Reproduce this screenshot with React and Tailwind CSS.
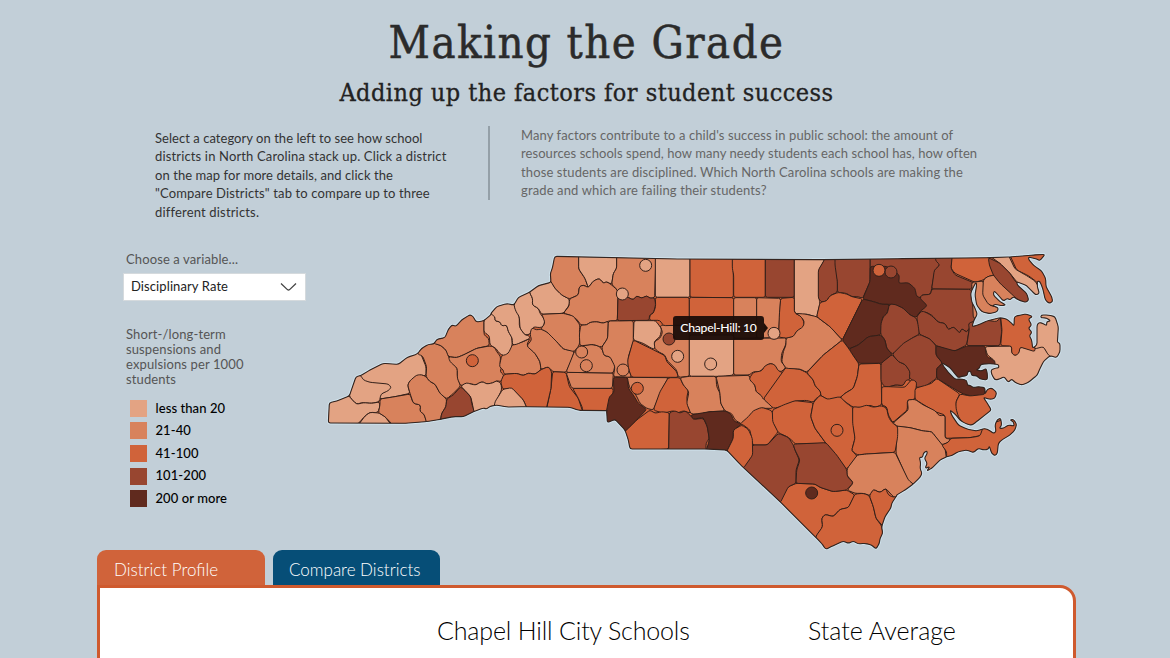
import React from "react";

const LEVELS = ["", "#e3a383", "#d8825c", "#d0633a", "#984630", "#602a1e"];

// Map sheets: each has an origin on the canvas and is digitised at three units per pixel.
const SHEETS = [
  {
    x: 320, y: 250,
    regions: [
      [1, "120,360 200,320 300,300 305,318 318,350 318,378 300,375 270,392 263,405 270,430 225,440 180,447 150,430 120,390"],
      [1, "88,438 100,370 122,376 130,390 150,397 205,402 214,412 205,422 183,432 178,455 155,460 125,458 110,463 95,448"],
      [1, "10,450 88,438 95,448 110,463 130,458 155,460 178,456 180,470 173,488 150,487 135,498 115,521 20,530"],
      [1, "115,525 135,498 150,487 178,489 195,500 214,525"],
      [2, "180,447 225,440 270,432 280,460 302,465 300,485 312,492 322,520 214,530 214,520 195,500 175,488 180,465"],
      [2, "270,430 263,405 270,392 290,375 305,374 318,380 330,395 345,402 360,430 380,447 378,470 365,490 360,520 322,525 312,492 300,485 302,465 280,460"],
      [2, "292,312 300,270 342,270 345,280 365,288 382,305 385,320 400,340 412,355 412,380 422,408 400,430 380,447 360,430 345,402 330,395 318,380 320,350 308,318"],
      [2, "340,280 350,240 396,200 450,180 470,200 492,204 492,255 506,265 508,287 470,295 430,315 410,323 385,320 378,300 362,286"],
      [2, "385,320 410,323 430,315 470,295 508,288 522,290 530,305 542,320 540,340 545,352 540,365 552,375 545,395 530,392 518,399 500,402 490,396 480,397 468,405 455,402 440,400 422,408 412,385 412,355 390,335"],
      [1, "422,408 440,398 455,403 468,405 480,397 490,396 500,402 518,399 530,392 543,400 545,420 535,440 525,465 500,495 462,500 458,465 452,440"],
      [4, "422,410 435,422 452,440 455,460 464,490 430,515 360,520 365,490 378,470 380,447 400,435"],
    ],
    dots: [[3, 457, 332]],
  },
  {
    x: 480, y: 245,
    regions: [
      [2, "65,333 97,300 130,290 150,280 140,300 165,325 180,350 183,374 165,388 145,384 130,392 110,385 72,388 70,375 58,365 62,345"],
      [1, "12,225 33,203 45,215 45,228 60,230 65,243 80,240 85,260 95,275 97,300 85,325 70,332 58,325 48,310 30,300 28,272 12,262"],
      [1, "33,208 40,170 100,165 102,182 118,215 118,245 135,270 147,272 150,280 110,298 97,300 97,280 85,260 80,240 65,243 60,230 45,228 45,215"],
      [1, "102,182 110,145 148,132 150,145 158,160 157,180 175,190 180,205 195,225 190,245 178,248 160,245 150,268 135,270 120,250 118,215 108,200"],
      [1, "148,142 175,105 210,95 215,112 225,130 245,150 268,162 268,180 250,205 185,208 175,190 157,180 158,160"],
      [2, "200,90 214,20 296,20 296,72 315,100 325,128 310,120 298,125 295,150 268,162 245,150 225,130 213,110"],
      [1, "296,20 410,20 410,70 400,85 395,118 380,110 370,115 358,100 340,108 325,128 315,100 296,72"],
      [2, "410,20 528,20 524,158 510,160 500,152 485,160 470,152 460,165 440,155 414,155 412,135 395,118 400,85 410,70"],
      [2, "325,128 340,108 358,100 370,115 380,110 395,120 412,135 414,155 412,227 385,228 370,235 350,230 330,232 320,240 302,240 290,222 270,210 250,205 268,182 268,162 295,150 298,125 310,120"],
      [2, "182,252 200,260 215,275 230,290 250,312 283,318 275,345 258,382 218,380 205,365 183,374 180,350 165,325 140,303 155,285 150,268 155,248 170,255"],
      [2, "185,208 250,205 280,213 300,240 298,260 300,280 298,300 283,320 250,312 230,290 215,275 200,260 182,252 195,235 190,218"],
      [3, "218,380 258,382 268,425 295,460 308,500 198,500 213,430"],
      [3, "72,388 110,385 130,392 145,384 165,388 183,374 205,365 215,380 213,430 198,495 143,495 130,465 95,430 68,433 62,410"],
      [1, "68,433 95,428 130,465 143,495 40,500 45,470 58,450"],
      [3, "278,430 400,430 397,460 387,478 382,505 308,505 308,490 295,460"],
      [2, "258,382 400,384 397,430 275,430"],
      [2, "283,320 300,305 330,298 355,302 368,315 372,332 390,335 405,360 400,384 258,382"],
      [2, "302,240 320,240 330,232 350,230 370,235 385,228 383,280 365,307 340,298 300,303 298,270"],
      [2, "385,228 460,227 460,290 445,335 445,370 455,397 400,395 405,365 390,335 372,332 365,307 383,280"],
      [4, "414,155 440,155 460,165 470,152 485,160 500,152 510,160 524,158 527,180 520,205 508,210 508,226 412,227"],
    ],
    dots: [],
  },
  {
    x: 620, y: 245,
    regions: [
      [1, "106,20 210,20 210,157 106,157"],
      [3, "210,20 340,20 340,158 210,157"],
      [3, "337,20 436,20 436,157 341,157 341,90 337,70"],
      [4, "436,20 523,20 523,157 436,157"],
      [2, "120,242 130,240 208,240 208,394 175,397 170,375 140,345 135,330 118,322 103,310 103,290 120,280 128,262"],
      [3, "106,157 208,157 208,240 130,242 120,226 88,226 90,210 100,205 107,185"],
      [3, "208,157 341,158 341,280 208,280"],
      [2, "341,158 410,158 410,280 341,280"],
      [2, "410,158 482,160 480,200 475,277 410,280"],
      [1, "523,20 615,20 615,42 597,75 597,160 600,175 590,217 560,207 540,210 523,203"],
      [3, "482,160 523,157 523,203 545,215 553,235 548,250 530,258 522,275 497,280 476,276 478,210"],
      [1, "208,270 341,270 341,390 310,394 208,394"],
      [2, "341,280 500,279 497,300 485,325 483,350 498,367 485,380 470,378 465,360 450,355 435,365 420,380 400,380 388,390 341,390"],
      [1, "42,227 107,227 125,252 120,275 102,290 105,312 95,310 70,295 40,285"],
      [3, "40,285 95,312 135,332 140,350 170,380 175,397 35,397 25,370 23,345"],
      [2, "20,397 145,398 125,435 100,495 80,490 60,475 48,450 30,430"],
      [3, "145,398 180,398 190,420 205,435 200,460 205,485 213,505 190,497 170,505 160,497 130,505 100,495 120,440"],
      [2, "180,398 208,394 288,394 290,425 300,445 302,475 315,498 270,500 240,507 213,507 200,475 207,440 190,420"],
      [2, "288,394 388,391 392,405 405,420 408,440 430,455 460,490 420,490 390,515 370,540 345,525 335,505 315,498 302,475 300,445"],
      [3, "388,400 400,382 425,378 435,362 452,355 465,360 475,378 490,383 430,465 425,452 408,440 405,420 392,408"],
      [3, "498,367 540,373 560,383 580,405 585,422 602,440 602,452 588,460 580,472 560,466 525,468 500,482 460,490 450,480 430,462"],
    ],
    dots: [],
  },
  {
    x: 780, y: 245,
    regions: [
      [2, "18,279 40,275 50,258 70,245 73,228 60,212 45,205 75,207 110,215 150,245 187,285 130,330 80,382 60,372 18,370 5,350 10,320 18,300"],
      [4, "270,20 478,20 480,60 465,75 455,130 452,148 425,150 420,160 440,180 340,200 270,100"],
      [4, "163,20 270,20 270,110 248,160 235,155 215,155 200,145 172,142 172,110 163,75"],
      [4, "135,20 165,20 165,60 172,110 172,142 150,152 140,168 125,172 115,160 115,75 133,45"],
      [3, "110,215 120,172 140,168 150,152 175,142 200,147 215,155 248,162 187,285 150,245"],
      [5, "271,64 320,64 352,85 358,92 356,115 385,113 405,130 410,155 430,160 442,178 440,188 425,195 408,218 390,210 370,190 340,178 325,178 305,178 280,170 248,162 270,110"],
      [5, "248,162 280,170 305,178 328,178 322,205 308,215 302,270 265,275 235,300 207,312 187,285"],
      [4, "328,178 345,178 370,190 390,210 408,218 418,245 418,268 395,280 370,300 337,328 320,310 315,285 302,268 303,235 310,215 322,205"],
      [5, "302,270 315,285 320,310 337,328 305,355 235,355 215,325 207,312 235,300 265,275"],
      [3, "187,285 207,312 215,325 237,357 232,395 220,430 195,445 180,458 150,467 122,452 122,440 105,422 100,405 80,383 130,330"],
      [3, "237,357 303,355 305,480 285,487 270,480 250,488 220,487 195,470 180,458 195,445 220,430 232,395"],
      [4, "303,355 337,328 355,350 375,358 392,380 390,403 375,412 370,422 345,420 330,425 313,425 303,410"],
      [3, "305,480 305,430 315,425 330,425 345,420 370,422 378,405 390,405 410,428 402,445 408,458 385,465 385,485 338,535 325,495"],
    ],
    dots: [],
  },
  {
    x: 900, y: 245,
    regions: [
      [4, "118,20 160,20 153,70 165,90 225,115 212,133 95,132 103,75 120,60 105,45"],
      [3, "158,20 265,20 270,60 283,90 262,95 250,105 225,112 165,85 153,70"],
      [4, "95,132 212,133 250,200 225,260 205,250 200,262 185,250 180,265 160,245 145,255 135,235 115,232 95,210 75,200 50,215 60,200 82,182 60,160 65,150 92,148"],
      [4, "50,215 65,198 78,202 95,212 115,232 135,235 145,255 160,245 180,265 185,250 200,262 208,250 200,300 165,318 145,315 108,302 90,282 58,268 55,245"],
      [4, "-23,328 10,295 35,280 58,268 90,282 108,302 108,330 128,355 110,370 110,400 95,410 75,425 50,428 38,405 28,400 30,380 15,358 -5,350"],
      [4, "208,252 205,235 300,200 305,260 300,302 200,302"],
      [5, "108,302 165,318 200,303 255,303 260,335 290,350 310,365 280,415 200,420 255,420 262,452 220,455 185,445 110,400 110,370 128,355 108,330"],
      [1, "255,305 335,303 335,322 345,332 355,325 360,305 385,312 403,312 425,300 450,330 500,430 265,440 264,375 285,362 285,348 262,330"],
      [3, "300,195 408,195 405,320 360,306 357,325 345,332 335,325 335,303 302,302 306,255"],
      [1, "403,312 405,190 500,190 500,350 470,350 445,330 430,305"],
      [2, "215,112 250,108 255,160 270,182 330,188 290,230 220,220"],
      [2, "250,105 262,95 283,90 300,115 360,160 340,190 300,190 265,178 248,150"],
      [3, "325,20 450,20 480,190 430,190 412,112 385,92 350,75"],
      [1, "265,30 325,30 345,72 380,92 405,108 425,140 425,160 375,130 350,110 330,85 300,55"],
      [4, "265,38 300,55 330,85 345,108 400,160 378,185 340,152 300,115 280,90 268,60"],
    ],
    dots: [],
  },
  {
    x: 880, y: 360,
    regions: [
      [3, "25,80 75,82 95,58 110,65 105,118 82,120 82,150 38,188 25,165 20,140 5,135 5,80"],
      [3, "105,85 140,75 155,70 170,55 240,102 228,125 230,145 238,165 260,190 320,205 310,225 270,233 195,235 195,165 165,155 105,118"],
      [3, "240,102 270,108 315,103 316,78 360,78 340,200 260,205 235,170 228,145 228,125"],
      [2, "38,190 85,150 82,120 105,118 130,135 165,152 178,168 195,165 195,235 212,237 205,247 185,255 155,215 130,213 90,203 55,200"],
      [2, "50,198 90,203 130,213 155,215 195,265 200,300 130,400 100,372 85,365 48,280"],
      [3, "185,255 205,247 212,235 270,233 300,228 310,200 420,160 430,240 340,300 200,305 200,275"],
    ],
    dots: [],
  },
  {
    x: 740, y: 380,
    regions: [
      [3, "0,132 25,110 40,92 65,82 90,90 97,95 100,125 115,155 82,195 38,195 30,150 10,135"],
      [3, "97,90 130,75 165,62 220,68 212,110 225,145 258,190 165,192 160,185 145,172 115,158 98,125"],
      [3, "220,68 240,45 262,58 300,50 320,70 338,82 340,130 345,175 335,212 352,228 320,268 258,190 225,145 212,110"],
      [3, "338,80 360,82 380,75 400,82 425,77 440,85 445,110 455,127 473,140 473,170 465,217 380,222 352,225 335,212 345,175 338,130"],
      [2, "352,225 380,222 465,217 505,300 535,325 475,360 460,350 437,325 420,338 400,328 392,347 370,340 345,340 322,330 340,308 320,285 322,265"],
      [3, "145,320 168,310 225,312 240,322 280,335 320,330 345,345 325,383 300,388 280,410 255,403 245,415 248,440 230,470 220,490 105,365"],
      [4, "38,195 82,195 115,160 145,172 160,195 165,210 178,240 168,270 168,310 145,320 120,370 -10,280"],
      [4, "165,192 258,188 290,225 320,268 322,290 340,308 320,330 280,335 240,322 225,312 168,310 170,270 180,240 165,210 160,195"],
      [3, "345,342 370,340 388,347 400,380 408,415 425,438 440,520 220,520 228,468 248,440 245,415 255,403 280,410 300,388 325,383"],
      [3, "388,347 400,328 420,338 437,325 445,345 460,352 485,345 430,440 408,415 400,380"],
    ],
    dots: [[3, 291, 151], [5, 215, 339]],
  },
  {
    x: 600, y: 360,
    regions: [
      [3, "75,212 110,180 150,150 165,160 185,155 208,158 206,267 80,275"],
      [5, "40,52 83,52 85,85 100,105 115,130 140,148 110,180 85,205 75,215 40,190 10,200 18,160 28,110 42,98"],
      [4, "208,158 225,152 240,160 255,152 270,165 280,178 310,175 322,200 328,235 318,250 318,275 206,275"],
      [5, "272,165 300,160 330,155 378,153 395,165 400,182 425,193 400,210 400,235 380,275 318,275 328,240 322,200 310,172 280,178"],
      [3, "380,275 400,235 400,210 425,195 445,208 457,235 458,285 430,325"],
    ],
    dots: [],
  },
  {
    x: 480, y: 245,
    regions: [],
    dots: [[1, 497, 61], [1, 427, 147], [2, 305, 321], [2, 319, 362], [2, 429, 375], [3, 472, 430], [4, 567, 282], [1, 593, 334], [1, 692, 357], [1, 882, 265], [3, 1197, 76], [4, 1233, 81]],
  },
];

// Coast and state line, as runs of points on the same sheets.
const OUTLINE = [
  [320, 250, "25,519 28,458 50,453 88,438 108,380 122,377 150,360 190,340 235,343 262,322 292,312 305,295 325,283 342,282 350,268 375,263 385,238 396,225 408,229 425,210 450,194 460,200 468,216 490,213 512,195"],
  [480, 245, "33,205 50,185 80,176 102,180 115,157 148,142 175,122 213,112 211,85 217,70 224,34 600,42"],
  [620, 245, "600,44"],
  [900, 245, "0,41 265,38 330,36 400,30 435,28 420,47 410,42 385,36 387,45 402,62 425,78 437,100 438,125 455,155 458,170 447,175 436,165 428,130 420,110 412,108 412,125 418,145 408,150 395,138 380,122 350,110 352,120 380,145 386,165 378,172 355,165 340,155 330,165 322,160 310,168 290,145 282,138 280,150 300,170 318,180 305,182 285,178 278,182 295,188 292,200 270,206 245,200 230,180 225,150 230,120 228,112 218,130 212,145 215,170 225,190 232,208 222,225 216,245 235,240 260,228 300,218 320,222 335,235 342,243 343,215 360,210 380,207 398,215 385,222 395,240 385,250 396,262 388,272 395,285 398,310 411,300 411,240 418,232 430,236 440,242 440,230 452,228 440,219 422,218 424,210 445,210 465,215 475,245 473,280 472,292 480,295 480,320 470,338 450,332 430,350 418,375 412,390 400,400 385,412 365,420 345,412 335,402 325,412 312,395 300,402 285,405 275,388 273,375 285,370 297,368 295,358 265,356 242,358 238,370 228,375 245,378 258,370 262,385 262,405 240,402 230,392 215,392 212,378 203,380 202,392 185,394 175,398 168,390 150,368 128,354"],
  [880, 360, "188,15 205,37 225,58 240,57 260,60 262,75 272,77 280,83 295,80 315,83 315,103 322,88 335,84 350,97 345,115 330,118 310,112 322,130 334,150 315,165 290,185 275,196 255,190 240,180 225,162 210,150 215,165 235,195 260,207 290,213 315,205 330,212 340,220 348,215 345,195 352,178 362,175 365,195 358,205 370,205 385,195 403,198 400,185 390,180 400,178 410,192 405,210 390,225 365,240 355,250 352,280 345,287 335,280 328,258 325,268 310,270 295,265 280,278 260,270 235,275 215,287 200,290 180,300 155,325 140,333 150,320 135,325 142,310 133,295 142,280 140,272 130,280 128,292 118,292 122,310 120,325 126,340 120,352 100,372 75,390 50,405"],
  [740, 380, "470,347 455,370 453,383 435,410 425,440 428,460 420,475 418,490 408,507 395,495 375,490 355,492 340,483 325,490 310,483 280,497 257,508 245,490 225,470 120,365 0,253"],
  [600, 360, "380,270 320,267 90,267 85,240 75,210 45,178 22,188 20,152"],
  [480, 245, "382,497 295,496 270,487 130,485 80,486 50,480 30,484 20,492"],
  [320, 250, "490,474 460,485 430,500 400,500 360,508 320,515 250,520"],
];

const toPoints = (text, x, y) =>
  text.split(" ").map((pair) => {
    const [a, b] = pair.split(",").map(Number);
    return [x + a / 3, y + b / 3];
  });

// Closed path whose corners are slightly eased.
function easedPath(points) {
  const n = points.length;
  let d = "";
  points.forEach((p, i) => {
    const prev = points[(i + n - 1) % n];
    const next = points[(i + 1) % n];
    const toward = (q) => {
      const len = Math.hypot(q[0] - p[0], q[1] - p[1]) || 1;
      const t = Math.min(len * 0.4, 2.2) / len;
      return [p[0] + (q[0] - p[0]) * t, p[1] + (q[1] - p[1]) * t].map((v) => v.toFixed(2));
    };
    d += `${i ? "L" : "M"}${toward(prev)}Q${p[0].toFixed(2)},${p[1].toFixed(2)} ${toward(next)}`;
  });
  return d + "Z";
}

const COAST = easedPath(OUTLINE.flatMap(([x, y, text]) => toPoints(text, x, y)));

function DistrictMap() {
  return (
    <svg className="block h-[300px] w-[740px]" viewBox="324 250 740 300" strokeLinejoin="round">
      <defs>
        <clipPath id="coast"><path d={COAST} /></clipPath>
      </defs>
      <path d={COAST} fill="none" stroke="#cfe3ed" strokeWidth="3" />
      <g clipPath="url(#coast)" stroke="#33201a" strokeWidth="1">
        <path d={COAST} fill="#d0633a" />
        {SHEETS.map((s, i) => (
          <g key={i}>
            {s.regions.map(([level, text], j) => (
              <path key={j} d={easedPath(toPoints(text, s.x, s.y))} fill={LEVELS[level]} />
            ))}
          </g>
        ))}
      </g>
      <path d={COAST} fill="none" stroke="#33241f" strokeWidth="1.1" />
      <g stroke="#33201a" strokeWidth="1">
        {SHEETS.flatMap((s) =>
          s.dots.map(([level, a, b]) => (
            <circle key={`${s.x + a}-${b}`} cx={s.x + a / 3} cy={s.y + b / 3} r="6" fill={LEVELS[level]} />
          ))
        )}
      </g>
    </svg>
  );
}

const LEGEND = [
  ["bg-[#e3a383]", "less than 20"],
  ["bg-[#d8825c]", "21-40"],
  ["bg-[#d0633a]", "41-100"],
  ["bg-[#984630]", "101-200"],
  ["bg-[#602a1e]", "200 or more"],
];

export default function App() {
  return (
    <div className="flex h-[658px] w-[1170px] flex-col overflow-hidden bg-[#c2cfd8] font-['Lato',sans-serif] text-[#333]">
      <header className="flex shrink-0 flex-col items-center pt-[14px] font-['Roboto_Slab','DejaVu_Serif',serif] font-stretch-condensed text-[#2b2b2b]">
        <h1 className="h-[58px] whitespace-nowrap pl-[3px] text-[45px] leading-[58px] tracking-[1.45px] [-webkit-text-stroke:0.5px_#2b2b2b]">Making the Grade</h1>
        <h2 className="mt-[3px] h-[35px] whitespace-nowrap pl-[3px] text-[25px] leading-9 tracking-[0.46px] text-[#222] [-webkit-text-stroke:0.3px_#222]">Adding up the factors for student success</h2>
      </header>

      <section className="flex h-[116px] shrink-0 pl-[155px] pt-[16px] text-[13px] leading-[18.4px]">
        <p className="w-[333px] whitespace-nowrap pt-[3px] text-[#333]">
          <span className="tracking-[0.04px]">Select a category on the left to see how school</span><br />
          <span className="tracking-[0.15px]">districts in North Carolina stack up. Click a district</span><br />
          <span className="tracking-[0.07px]">on the map for more details, and click the</span><br />
          <span className="tracking-[0.14px]">"Compare Districts" tab to compare up to three</span><br />
          <span className="tracking-[0.17px]">different districts.</span>
        </p>
        <p className="h-[74px] whitespace-nowrap border-l-2 border-[#94a0a8] pl-[31px] text-[#666]">
          <span className="tracking-[0.08px]">Many factors contribute to a child's success in public school: the amount of</span><br />
          <span className="tracking-[0.07px]">resources schools spend, how many needy students each school has, how often</span><br />
          <span className="tracking-[0.12px]">those students are disciplined. Which North Carolina schools are making the</span><br />
          <span className="tracking-[0.13px]">grade and which are failing their students?</span>
        </p>
      </section>

      <main className="flex h-[324px] shrink-0 pl-[123px] pt-[24px]">
        <aside className="w-[201px]">
          <label className="block pl-[3px] text-[13px] leading-[18px] tracking-[0.12px] text-[#555]">Choose a variable...</label>
          <button className="mt-[5px] flex h-[28px] w-[183px] items-center justify-between border border-[#d5dadd] bg-white pl-[7px] pr-2 text-[13px] tracking-[0.1px] text-[#222]">
            Disciplinary Rate
            <svg className="h-[10px] w-[17px]" viewBox="0 0 17 10" fill="none" stroke="#444" strokeWidth="1.3">
              <path d="M1 1.5 7.4 7.6Q8.5 8.6 9.6 7.6L16 1.5" />
            </svg>
          </button>
          <p className="mt-[26px] whitespace-nowrap pl-[3px] text-[13px] leading-[15px] tracking-[0.12px] text-[#555]">
            Short-/long-term<br />suspensions and<br />expulsions per 1000<br />students
          </p>
          <ul className="mt-[10px] pl-[7px] text-[13px] font-medium tracking-[0.08px] text-black">
            {LEGEND.map(([swatch, label]) => (
              <li key={label} className="flex h-[22.6px] items-center gap-[8.5px]">
                <span className={`size-[17px] ${swatch}`} />
                {label}
              </li>
            ))}
          </ul>
        </aside>
        <div className="relative h-[300px] w-[740px]">
          <DistrictMap />
          <div className="absolute left-[349px] top-[66px] flex items-center">
            <span className="flex h-[24px] w-[91px] items-center justify-center whitespace-nowrap rounded-[3px] bg-[#1b0d08]/95 text-[12.2px] font-medium tracking-[-0.25px] text-white">Chapel-Hill: 10</span>
            <svg className="h-[10px] w-[4px]" viewBox="0 0 4 10"><path d="M0 0 4 5 0 10Z" fill="#20100a" /></svg>
          </div>
        </div>
      </main>

      <section className="flex min-h-0 flex-1 flex-col pl-[97px]">
        <nav className="flex shrink-0 gap-[8px] font-light text-white">
          <button className="h-[35px] w-[168px] rounded-t-[9px] bg-[#d0633a] pl-[17px] pt-[4px] text-left text-[17px]">District Profile</button>
          <button className="h-[35px] w-[167px] rounded-t-[9px] bg-[#064e77] pl-[16px] pt-[4px] text-left text-[17px]">Compare Districts</button>
        </nav>
        <div className="flex h-[90px] w-[979px] shrink-0 rounded-tr-[16px] border-[3px] border-[#cf5a2e] bg-white pl-[337px] pt-[26px] text-[25px] font-light leading-[32px] text-black">
          <h3 className="w-[371px] whitespace-nowrap tracking-[-0.16px]">Chapel Hill City Schools</h3>
          <h3 className="whitespace-nowrap">State Average</h3>
        </div>
      </section>
    </div>
  );
}
